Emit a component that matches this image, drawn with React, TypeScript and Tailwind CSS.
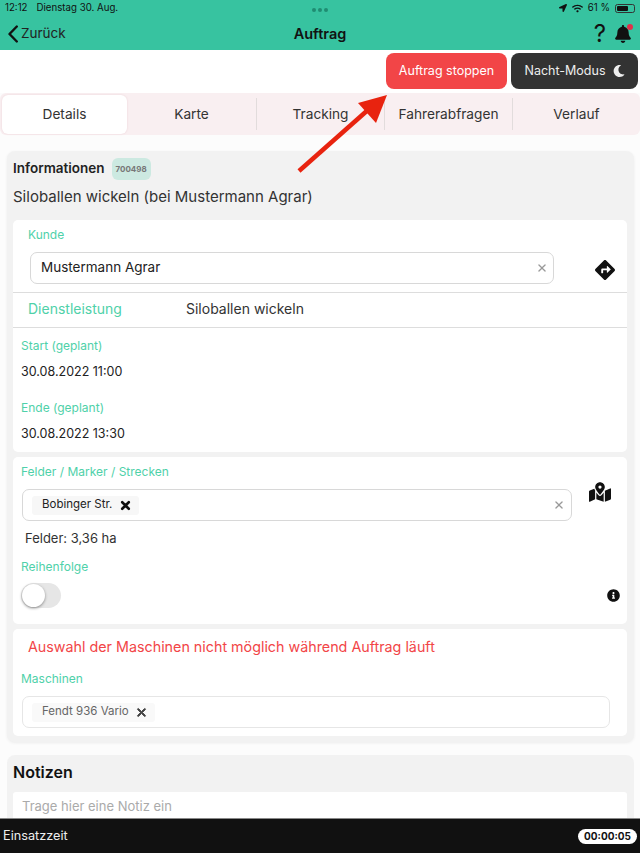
import { FaDirections, FaMapMarkedAlt, FaInfoCircle, FaMoon, FaBell, FaWifi, FaLocationArrow } from "react-icons/fa";
import { IoClose } from "react-icons/io5";

const tabs = ["Details", "Karte", "Tracking", "Fahrerabfragen", "Verlauf"];

function Label({ children }: { children: string }) {
  return <div className="text-[12px] leading-[16px] text-[#4fd1a9]">{children}</div>;
}

function ClearX() {
  return <IoClose className="text-[14px] text-[#999]" />;
}

export default function App() {
  return (
    <div
      className="relative flex h-[853px] w-[640px] flex-col overflow-hidden bg-[#fcfcfc] text-[#222]"
      style={{ fontFamily: "Inter, 'Noto Sans', sans-serif" }}
    >
      {/* Status bar + header */}
      <header className="h-[50px] shrink-0 bg-[#37c3a0]">
        <div className="relative flex h-[17px] items-center justify-between pl-[5px] pr-[5px] text-[9.7px] text-[#111]">
          <div className="flex gap-[9px]">
            <span>12:12</span>
            <span>Dienstag 30. Aug.</span>
          </div>
          <div className="absolute left-[312px] top-[8px] flex gap-[2px]">
            <span className="h-[4px] w-[4px] rounded-full bg-[#1f8d72]" />
            <span className="h-[4px] w-[4px] rounded-full bg-[#1f8d72]" />
            <span className="h-[4px] w-[4px] rounded-full bg-[#1f8d72]" />
          </div>
          <div className="flex items-center gap-[5px]">
            <FaLocationArrow className="text-[8px]" />
            <FaWifi className="text-[11px]" />
            <span>61 %</span>
            <span className="flex h-[9px] w-[20px] items-center rounded-[2.5px] border border-[#333] p-[1px]">
              <span className="h-full w-[11px] rounded-[1px] bg-[#111]" />
            </span>
          </div>
        </div>
        <div className="flex h-[33px] items-center justify-between pl-[8px] pr-[8px]">
          <div className="flex w-[150px] items-center gap-[3px] text-[13.5px] text-[#222]">
            <svg width="10" height="18" viewBox="0 0 10 18" fill="none" stroke="#111" strokeWidth="2.4" strokeLinecap="round" strokeLinejoin="round">
              <path d="M8.8 1.5 L1.5 9 L8.8 16.5" />
            </svg>
            <span>Zurück</span>
          </div>
          <div className="text-[14.5px] font-semibold text-[#111]">Auftrag</div>
          <div className="flex w-[150px] items-center justify-end gap-[8px] text-[#111]">
            <span className="text-[24px] leading-none">?</span>
            <span className="relative">
              <FaBell className="text-[18px]" />
              <span className="absolute right-[-1px] top-[-1px] h-[6px] w-[6px] rounded-full bg-[#e0314b]" />
            </span>
          </div>
        </div>
      </header>

      {/* Actions */}
      <div className="flex h-[43px] shrink-0 items-center justify-end gap-[4px] bg-white pb-[1px] pr-[2px]">
        <button className="h-[36px] w-[121px] rounded-[8px] bg-[#f24547] text-[12.5px] text-white">Auftrag stoppen</button>
        <button className="flex h-[36px] w-[127px] items-center justify-center gap-[7px] rounded-[8px] bg-[#333] text-[12.5px] text-[#eee]">
          Nacht-Modus <FaMoon className="text-[12px]" />
        </button>
      </div>

      {/* Tabs */}
      <div className="flex h-[42px] shrink-0 items-center rounded-[6px] bg-[#f9eff1] pl-[2px] text-[13.7px] text-[#333]">
        {tabs.map((tab, i) => (
          <div
            key={tab}
            className={
              i === 0
                ? "flex h-[39px] w-[125px] items-center justify-center rounded-[6px] bg-white shadow-[0_0_2px_#eacfd5]"
                : i === 1
                  ? "flex h-[32px] w-[129px] items-center justify-center"
                  : "flex h-[32px] w-[128px] items-center justify-center border-l border-[#e2dcdc]"
            }
          >
            {tab}
          </div>
        ))}
      </div>

      {/* Content */}
      <main className="min-h-0 flex-1 overflow-hidden pl-[7px] pr-[6px] pt-[16px]">
        <section className="rounded-[8px] bg-[#f2f2f2] pb-[6px] pl-[6px] pr-[7px] shadow-[0_1px_3px_#ececec]">
          <div className="flex h-[34px] items-center gap-[7px] pt-[1px]">
            <span className="text-[13.5px] font-semibold text-[#222]">Informationen</span>
            <span className="flex h-[22px] w-[39px] items-center justify-center rounded-[6px] bg-[#cce9e1] text-[8px] font-bold text-[#777]">700498</span>
          </div>
          <div className="h-[35px] pt-[1px] text-[15px] leading-[22px] text-[#333]">Siloballen wickeln (bei Mustermann Agrar)</div>

          <div className="rounded-[5px] bg-white">
            <div className="px-[15px] pt-[7px]">
              <Label>Kunde</Label>
            </div>
            <div className="flex items-center pb-[8px] pl-[17px] pr-[12px] pt-[9px]">
              <div className="flex h-[32px] flex-1 items-center justify-between rounded-[7px] border border-[#d8d8d8] pb-[1px] pl-[10px] pr-[4px] text-[13.5px] text-[#222]">
                Mustermann Agrar
                <ClearX />
              </div>
              <FaDirections className="ml-[41px] mt-[3px] text-[20px] text-[#111]" />
            </div>
            <div className="flex h-[36px] items-center border-y border-[#ddd] pb-[3px] pl-[15px] text-[14px]">
              <span className="w-[158px] text-[#4fd1a9]">Dienstleistung</span>
              <span className="text-[#333]">Siloballen wickeln</span>
            </div>
            <div className="px-[8px] pb-[9px] pt-[10px] text-[#222]">
              <Label>Start (geplant)</Label>
              <div className="mt-[9px] h-[37px] text-[12.5px] leading-[18px]">30.08.2022 11:00</div>
              <Label>Ende (geplant)</Label>
              <div className="mt-[9px] text-[12.5px] leading-[18px]">30.08.2022 13:30</div>
            </div>
          </div>

          <div className="mt-[5px] flex rounded-[5px] bg-white pb-[16px] pl-[8px] pr-[5px] pt-[7px]">
            <div className="min-w-0 flex-1">
              <Label>Felder / Marker / Strecken</Label>
              <div className="ml-[1px] mt-[9px] flex h-[32px] items-center justify-between rounded-[7px] border border-[#d8d8d8] pl-[9px] pr-[5px]">
                <span className="flex h-[19px] items-center gap-[6px] rounded-[3px] bg-[#f7f7f7] pl-[10px] pr-[6px] text-[11.5px] text-[#222]">
                  Bobinger Str. <IoClose className="text-[15px] text-[#111]" strokeWidth={40} />
                </span>
                <ClearX />
              </div>
              <div className="ml-[4px] mt-[8px] text-[13px] leading-[18px] text-[#333]">Felder: 3,36 ha</div>
              <div className="mt-[12px]">
                <Label>Reihenfolge</Label>
              </div>
              <div className="mt-[8px] flex h-[25px] w-[40px] items-center rounded-full bg-[#e6e6e6]">
                <span className="ml-[1px] h-[23px] w-[23px] rounded-full bg-white shadow-[0_1px_3px_#888]" />
              </div>
            </div>
            <div className="flex w-[50px] flex-col items-end justify-between pb-[6px] pt-[17px]">
              <FaMapMarkedAlt className="mr-[11px] text-[22px] text-[#111]" />
              <FaInfoCircle className="mr-[2px] text-[13px] text-[#111]" />
            </div>
          </div>

          <div className="mt-[5px] rounded-[5px] bg-white pb-[8px] pl-[8px] pr-[17px] pt-[8px]">
            <div className="pl-[7px] text-[14.3px] leading-[20px] text-[#f24547]">Auswahl der Maschinen nicht möglich während Auftrag läuft</div>
            <div className="mt-[14px]">
              <Label>Maschinen</Label>
            </div>
            <div className="ml-[1px] mt-[9px] flex h-[32px] items-center rounded-[7px] border border-[#e6e6e6] pl-[9px]">
              <span className="flex h-[19px] items-center gap-[5px] rounded-[3px] bg-[#f9f9f9] pl-[10px] pr-[6px] text-[11.5px] text-[#666]">
                Fendt 936 Vario <IoClose className="text-[15px] text-[#444]" strokeWidth={30} />
              </span>
            </div>
          </div>
        </section>

        <section className="mt-[13px] rounded-[8px] bg-[#f2f2f2] pl-[6px] pr-[7px]">
          <div className="flex h-[37px] items-center pb-[3px] text-[16px] font-semibold text-[#111]">Notizen</div>
          <div className="h-[40px] rounded-[3px] bg-white px-[9px] pt-[4px] text-[13px] leading-[20px] text-[#aaa]">Trage hier eine Notiz ein</div>
        </section>
      </main>

      {/* Bottom bar */}
      <footer className="flex h-[35px] shrink-0 items-center justify-between border-t border-[#888] bg-[#111] pl-[3px] pr-[3px] text-[12.7px] text-[#eee]">
        <span>Einsatzzeit</span>
        <span className="flex h-[15px] w-[59px] items-center justify-center rounded-full bg-white text-[10px] font-bold text-[#111]">00:00:05</span>
      </footer>

      {/* Annotation arrow */}
      <svg className="absolute left-[295px] top-[92px]" width="95" height="82" viewBox="0 0 95 82">
        <path d="M4 79 L74 17" stroke="#e8230f" strokeWidth="4.5" fill="none" />
        <path d="M92 3 L63 11 L81 31 Z" fill="#e8230f" />
      </svg>
    </div>
  );
}
